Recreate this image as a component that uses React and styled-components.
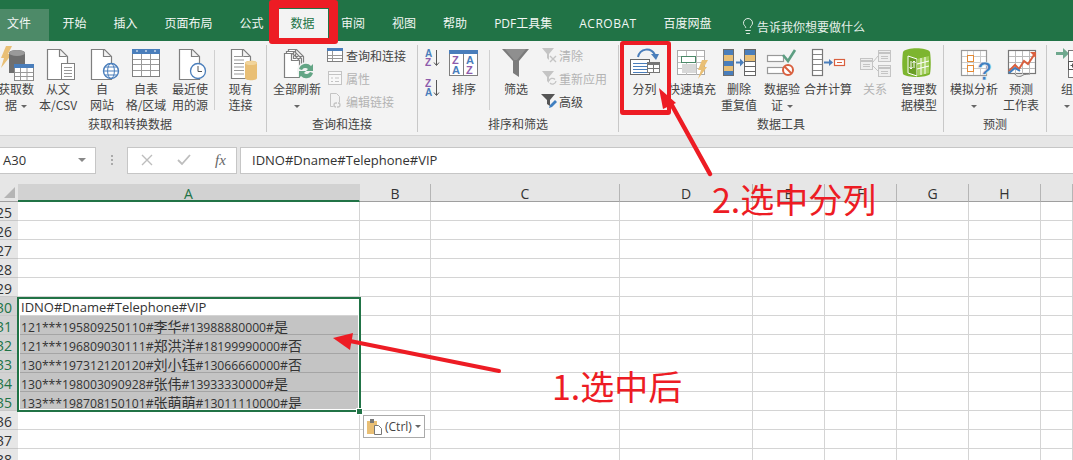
import React from 'react';
import styled, { createGlobalStyle } from 'styled-components';
import { Lightbulb } from 'lucide-react';

const GREEN = '#217346';
const RED = '#ed1c24';
const LATIN = '"Open Sans", "Noto Sans CJK SC", sans-serif';
const COLS = '18px 342px 71px 189px 133px 72px 72px 72px 72px 1fr';

const GlobalStyle = createGlobalStyle`
  html, body { margin: 0; padding: 0; background: #fff; }
  body { font-family: "Noto Sans CJK SC", "Liberation Sans", sans-serif; font-size: 12px; color: #444; }
`;

const Page = styled.div`
  position: relative;
  width: 1073px;
  height: 460px;
  overflow: hidden;
`;

const TabBar = styled.div`
  display: flex;
  align-items: flex-end;
  height: 41px;
  background: ${GREEN};
`;

const Tab = styled.div`
  height: 32px;
  line-height: 29px;
  padding: 0 13.5px;
  color: #f2f7f4;
  white-space: nowrap;
  font-family: ${LATIN};
  font-size: 12px;
  letter-spacing: ${p => p.$ls || 0}px;
`;

const FileTab = styled(Tab)`
  padding: 0 18px 0 7px;
  background: #4d8a68;
`;

const ActiveTab = styled(Tab)`
  width: 49px;
  box-sizing: border-box;
  padding: 0 12px;
  margin-left: 1.5px;
  background: #f3f3f3;
  color: ${GREEN};
`;

const TellMe = styled.div`
  display: flex;
  align-items: center;
  height: 30px;
  margin-left: 14px;
  color: #e6f0ea;
  white-space: nowrap;
`;

const Ribbon = styled.div`
  display: flex;
  height: 94px;
  margin-left: -6px;
  background: #f3f3f3;
  border-bottom: 1px solid #d4d4d4;
`;

const Group = styled.div`
  display: flex;
  flex-direction: column;
  flex: none;
  width: ${p => p.$w}px;
`;

const Tools = styled.div`
  display: flex;
  flex: 1;
  padding-top: 5px;
  min-height: 0;
`;

const GroupLabel = styled.div`
  height: 22px;
  line-height: 22px;
  text-align: center;
  color: #444;
  white-space: nowrap;
`;

const GroupSep = styled.div`
  flex: none;
  width: 1px;
  margin: 4px 0 3px;
  background: #c8c8c8;
`;

const ToolSep = styled.div`
  flex: none;
  width: 1px;
  height: 60px;
  margin: 4px ${p => p.$mr || 0}px 0 ${p => p.$ml || 0}px;
  background: #d0d0d0;
`;

const Tool = styled.div`
  display: flex;
  flex-direction: column;
  align-items: center;
  flex: none;
  width: ${p => p.$w}px;
  margin-left: ${p => p.$ml || 0}px;
  color: ${p => (p.$off ? '#b4b4b4' : '#444')};

  svg { display: block; flex: none; overflow: visible; }
`;

const ToolText = styled.div`
  margin-top: -1px;
  line-height: 15.5px;
  text-align: center;
  white-space: nowrap;
`;

const Caret = styled.span`
  display: inline-block;
  width: 0;
  height: 0;
  margin-left: ${p => p.$ml ?? 4}px;
  vertical-align: 2px;
  border: 3px solid transparent;
  border-top: 3px solid #666;
  border-bottom: 0;
`;

const Stack = styled.div`
  display: flex;
  flex-direction: column;
  flex: none;
  gap: ${p => p.$gap ?? 7}px;
  margin-left: ${p => p.$ml || 0}px;
  padding-top: ${p => p.$top ?? 1}px;
`;

const StackItem = styled.div`
  display: flex;
  align-items: center;
  gap: ${p => p.$gap ?? 3}px;
  height: 16px;
  white-space: nowrap;
  color: ${p => (p.$off ? '#b4b4b4' : '#444')};
`;

const FormulaBar = styled.div`
  display: flex;
  align-items: center;
  height: 48px;
  background: #e6e6e6;
`;

const NameBox = styled.div`
  display: flex;
  align-items: center;
  justify-content: space-between;
  box-sizing: border-box;
  width: 97px;
  height: 27px;
  margin-left: -1px;
  padding: 0 9px 0 3px;
  background: #fff;
  border: 1px solid #c6c6c6;
  font-family: ${LATIN};
  font-size: 13px;
  color: #333;
`;

const NameCaret = styled.span`
  width: 0;
  height: 0;
  border: 4px solid transparent;
  border-top: 4px solid #888;
  border-bottom: 0;
`;

const Grip = styled.div`
  width: 2px;
  height: 10px;
  margin: 0 14px 0 15px;
  background: repeating-linear-gradient(#aaa 0 2px, transparent 2px 4px);
`;

const FormulaButtons = styled.div`
  display: flex;
  align-items: center;
  gap: 24px;
  box-sizing: border-box;
  width: 110px;
  height: 27px;
  padding-left: 13px;
  background: #fff;
  border: 1px solid #c6c6c6;
`;

const FxLabel = styled.span`
  font: italic 15px "Liberation Serif", serif;
  color: #666;
`;

const FormulaInput = styled.div`
  flex: 1;
  height: 27px;
  margin-left: 3px;
  padding-left: 11px;
  line-height: 24px;
  box-sizing: border-box;
  background: #fff;
  border: 1px solid #c6c6c6;
  border-right: 0;
  font-family: ${LATIN};
  font-size: 13px;
  color: #333;
`;

const Sheet = styled.div`
  position: relative;
  font-family: ${LATIN};
`;

const HeaderRow = styled.div`
  display: grid;
  grid-template-columns: ${COLS};
  height: 18px;
`;

const ColHead = styled.div`
  box-sizing: border-box;
  height: 18px;
  line-height: 20px;
  text-align: center;
  font-size: 14px;
  background: ${p => (p.$on ? '#d2d2d2' : '#e6e6e6')};
  color: ${p => (p.$on ? GREEN : '#333')};
  border-right: 1px solid ${p => (p.$on ? '#d2d2d2' : '#b5b5b5')};
  border-bottom: ${p => (p.$on ? `2px solid ${GREEN}` : '1px solid #9f9f9f')};
`;

const Corner = styled.div`
  position: relative;
  height: 18px;
  box-sizing: border-box;
  background: #e6e6e6;
  border-bottom: 1px solid #9f9f9f;

  &::after {
    content: '';
    position: absolute;
    right: 3px;
    bottom: 3px;
    border-style: solid;
    border-width: 0 0 11px 11px;
    border-color: transparent transparent #b5b5b5 transparent;
  }
`;

const Row = styled.div`
  display: grid;
  grid-template-columns: ${COLS};
  height: 19px;
`;

const RowHead = styled.div`
  box-sizing: border-box;
  display: flex;
  justify-content: flex-end;
  height: 19px;
  padding-right: 6px;
  overflow: hidden;
  line-height: 21px;
  font-size: 14px;
  background: ${p => (p.$on ? '#d2d2d2' : '#e6e6e6')};
  color: ${p => (p.$on ? GREEN : '#333')};
  border-bottom: 1px solid #c8c8c8;
`;

const Cell = styled.div`
  box-sizing: border-box;
  height: 19px;
  padding-left: 3px;
  line-height: 20px;
  font-size: ${p => (p.$big ? 13 : 12.2)}px;
  color: #333;
  white-space: nowrap;
  background: ${p => (p.$on ? '#c4c4c4' : '#fff')};
  border-right: 1px solid ${p => (p.$on ? '#c4c4c4' : '#d4d4d4')};
  border-bottom: 1px solid ${p => (p.$on ? '#a5a5a5' : '#d4d4d4')};
`;

const Han = styled.span`
  font-family: "Noto Sans CJK SC", sans-serif;
  font-size: 14px;
`;

const Selection = styled.div`
  position: absolute;
  left: 17px;
  top: 113px;
  width: 344px;
  height: 115px;
  box-sizing: border-box;
  border: 2px solid ${GREEN};
  box-shadow: inset 0 0 0 1px #fff;
`;

const Handle = styled.div`
  position: absolute;
  right: -4px;
  bottom: -5px;
  width: 7px;
  height: 7px;
  box-sizing: border-box;
  background: ${GREEN};
  border: 1px solid #fff;
`;

const PasteTag = styled.div`
  position: absolute;
  left: 363px;
  top: 231px;
  display: flex;
  align-items: center;
  gap: 3px;
  box-sizing: border-box;
  width: 62px;
  height: 23px;
  padding-left: 3px;
  background: #fff;
  border: 1px solid #aaa;
  font-size: 12px;
  color: #444;
`;

const Mark = styled.div`
  position: absolute;
  left: ${p => p.$x}px;
  top: ${p => p.$y}px;
  width: ${p => p.$w}px;
  height: ${p => p.$h}px;
  box-sizing: border-box;
  border-style: solid;
  border-color: ${RED};
  border-width: ${p => p.$b};
  border-radius: 3px;
`;

const Note = styled.div`
  position: absolute;
  left: ${p => p.$x}px;
  top: ${p => p.$y}px;
  font-family: "Noto Sans CJK SC", sans-serif;
  font-size: 34px;
  line-height: 50px;
  color: ${RED};
  white-space: nowrap;
`;

const Arrows = styled.svg`
  position: absolute;
  left: 0;
  top: 0;
  pointer-events: none;
`;

const GRAY = '#7f7f7f';
const BLUE = '#4a7ebb';
const GOLD = '#e9bf75';
const LIGHT = '#c4c4c4';

function Sheetfold({ x, y, w, h, c = GRAY }) {
  return (
    <path
      d={`M${x + .5} ${y + .5}h${w - 7}l7 7v${h - 8}h${-w}z M${x + w - 7.5} ${y + .5}v7h7`}
      fill="#fff"
      stroke={c}
      strokeWidth="1.2"
    />
  );
}

function TextLines({ x, y, w, n, gap = 3, c = '#999' }) {
  const lines = [];
  for (let i = 0; i < n; i++) {
    lines.push(<path key={i} d={`M${x} ${y + i * gap + .5}h${w}`} stroke={c} />);
  }
  return <>{lines}</>;
}

function Icon({ w = 36, h = 36, children }) {
  return <svg width={w} height={h} viewBox={`0 0 ${w} ${h}`}>{children}</svg>;
}

function GetDataIcon() {
  return (
    <Icon>
      <path d="M8 0h6l-4 8h4L3 22l3-10H3z" fill={GOLD} />
      <path d="M11 7c0-4 16-4 16 0v20H11z" fill="#6f6f6f" />
      <ellipse cx="19" cy="7" rx="8" ry="3" fill="#9a9a9a" />
      <rect x="16.5" y="18.5" width="19" height="16" fill="#fff" stroke="#8a8a8a" />
      <rect x="16" y="18" width="20" height="4" fill={BLUE} />
      <path d="M17 26.5h18M17 30.5h18M22.5 22v12M29 22v12" stroke="#999" />
    </Icon>
  );
}

function TextFileIcon() {
  return (
    <Icon>
      <Sheetfold x={7} y={3} w={20} h={31} />
      <rect x="21.5" y="17.5" width="13" height="16" fill="#fff" stroke={GRAY} />
      <TextLines x={24} y={21} w={8} n={4} />
    </Icon>
  );
}

function WebIcon() {
  return (
    <Icon>
      <Sheetfold x={7} y={3} w={20} h={31} />
      <circle cx="27" cy="25" r="7.5" fill="#fff" stroke={BLUE} strokeWidth="1.4" />
      <ellipse cx="27" cy="25" rx="3.4" ry="7.5" fill="none" stroke={BLUE} />
      <path d="M19.5 25h15M20.5 21h13M20.5 29h13" stroke={BLUE} />
    </Icon>
  );
}

function TableIcon() {
  return (
    <Icon>
      <rect x="4.5" y="3.5" width="27" height="27" fill="#fff" stroke={GRAY} />
      <rect x="4" y="3" width="28" height="5" fill={BLUE} />
      <path d="M8 5h2M17 5h2M26 5h2" stroke="#fff" />
      <path d="M5 13.5h26M5 18.5h26M5 24.5h26M13.5 8v22M22.5 8v22" stroke="#999" />
    </Icon>
  );
}

function RecentIcon() {
  return (
    <Icon>
      <Sheetfold x={7} y={3} w={20} h={31} />
      <circle cx="26" cy="25" r="7.5" fill="#fff" stroke={BLUE} strokeWidth="1.3" />
      <path d="M26 20v5.5h4" fill="none" stroke="#555" />
    </Icon>
  );
}

function ExistingIcon() {
  return (
    <Icon>
      <Sheetfold x={8} y={3} w={19} h={30} />
      <TextLines x={11} y={10} w={10} n={6} gap={3.5} />
      <path d="M22 17c0-3 12-3 12 0v15c0 3-12 3-12 0z" fill={GOLD} />
      <ellipse cx="28" cy="17" rx="6" ry="2" fill="#f1d49b" />
    </Icon>
  );
}

function RefreshIcon() {
  return (
    <Icon>
      <Sheetfold x={9} y={3} w={15} h={24} />
      <Sheetfold x={7} y={5} w={15} h={25} />
      <Sheetfold x={5} y={7} w={15} h={25} />
      <circle cx="27" cy="25" r="9" fill="#f3f3f3" />
      <path d="M20 23a7 7 0 0 1 12-3l2-2v7h-7l2-2a4 4 0 0 0-6 1zM34 27a7 7 0 0 1-12 3l-2 2v-7h7l-2 2a4 4 0 0 0 6-1z" fill="#63a585" />
    </Icon>
  );
}

function QueryIcon() {
  return (
    <Icon w={16} h={16}>
      <rect x=".5" y="1.5" width="15" height="13" fill="#fff" stroke={GRAY} />
      <rect x="0" y="1" width="16" height="3" fill={BLUE} />
      <path d="M1 8.5h14M1 11.5h14M5.5 4v10" stroke="#999" />
    </Icon>
  );
}

function PropsIcon() {
  return (
    <Icon w={16} h={16}>
      <rect x="1.5" y="1.5" width="13" height="13" fill="#f8f8f8" stroke={LIGHT} />
      <path d="M1 4.5h14" stroke={LIGHT} />
      <path d="M4 8h2M8 8h4M4 11.5h2M8 11.5h4" stroke={LIGHT} />
    </Icon>
  );
}

function LinksIcon() {
  return (
    <Icon w={16} h={16}>
      <path d="M3.5 .5h6l3 3v6M3.5 .5v13h3" fill="none" stroke={LIGHT} />
      <path d="M7 12a2 2 0 0 1 2-2h1M13 12a2 2 0 0 1-2 2h-1M9 14a2 2 0 0 1-2-2M11 10a2 2 0 0 1 2 2" fill="none" stroke={LIGHT} strokeWidth="1.3" />
    </Icon>
  );
}

const Letter = ({ x, y, c, s = 10, children }) => (
  <text x={x} y={y} fill={c} fontSize={s} fontFamily='"Liberation Sans", sans-serif' fontWeight="700">{children}</text>
);

function SortSmall({ up }) {
  return (
    <Icon w={16} h={18}>
      <Letter x={0} y={8} c={up ? BLUE : '#8e5bab'}>{up ? 'A' : 'Z'}</Letter>
      <Letter x={0} y={17} c={up ? '#8e5bab' : BLUE}>{up ? 'Z' : 'A'}</Letter>
      <path d="M11.5 1v15M9 13.5l2.5 3 2.5-3" fill="none" stroke="#555" />
    </Icon>
  );
}

function SortBig() {
  return (
    <Icon w={30} h={36}>
      <rect x=".5" y="4.5" width="28" height="25" fill="#fff" stroke={GRAY} />
      <rect x="0" y="4" width="29" height="4" fill={BLUE} />
      <path d="M14.5 8v22" stroke={GRAY} />
      <Letter x={3} y={18} c="#8e5bab" s={11}>Z</Letter>
      <Letter x={3} y={28} c={BLUE} s={11}>A</Letter>
      <Letter x={17} y={18} c={BLUE} s={11}>A</Letter>
      <Letter x={17} y={28} c="#8e5bab" s={11}>Z</Letter>
    </Icon>
  );
}

function FunnelIcon() {
  return (
    <Icon>
      <path d="M4 3h27L21 15v16l-6-4V15z" fill="#7b7b7b" />
      <path d="M7 3h21L19 14h-3z" fill="#8f8f8f" />
    </Icon>
  );
}

function ClearIcon() {
  return (
    <Icon w={16} h={16}>
      <path d="M1 1h12L8 7v6L6 11V7z" fill={LIGHT} />
      <path d="M9 9l6 6M15 9l-6 6" stroke={LIGHT} strokeWidth="1.4" />
    </Icon>
  );
}

function ReapplyIcon() {
  return (
    <Icon w={16} h={16}>
      <path d="M1 1h12L8 7v6L6 11V7z" fill={LIGHT} />
      <path d="M8 11a3.5 3.5 0 0 1 6-1.5M15 11a3.5 3.5 0 0 1-6 2" fill="none" stroke={LIGHT} strokeWidth="1.3" />
    </Icon>
  );
}

function AdvancedIcon() {
  return (
    <Icon w={16} h={16}>
      <path d="M0 1h14L9 7v6L6 11V7z" fill="#555" />
      <path d="M8 15l1-3 5-5 2 2-5 5z" fill="#3f7fc0" />
    </Icon>
  );
}

function TextToColsIcon() {
  return (
    <Icon>
      <path d="M11 11C13 2 24 1 28 9" fill="none" stroke={BLUE} strokeWidth="2" />
      <path d="M24 8l8 0-3 6z" fill={BLUE} />
      <rect x="3.5" y="13.5" width="19" height="15" fill="#fff" stroke="#666" />
      <path d="M6 17.5h14M6 20.5h14M6 23.5h14M6 26.5h14" stroke={BLUE} />
      <rect x="20.5" y="16.5" width="12" height="10" fill="#fff" stroke="#777" />
      <rect x="20" y="16" width="13" height="3" fill="#777" />
      <path d="M26.5 19v7M21 22.5h11" stroke="#777" />
    </Icon>
  );
}

function FlashFillIcon() {
  return (
    <Icon>
      <rect x="3.5" y="4.5" width="27" height="24" fill="#fff" stroke="#aaa" />
      <path d="M4 10.5h26M4 16.5h26M4 22.5h26M12.5 5v24M22.5 5v24" stroke="#bbb" />
      <rect x="7.5" y="10.5" width="14" height="6" fill="#fff" stroke="#4c8a69" />
      <rect x="8" y="18" width="14" height="9" fill="#d8d8d8" />
      <path d="M28 14h6l-4 7h3L24 33l3-9h-3z" fill={GOLD} />
    </Icon>
  );
}

function RemoveDupIcon() {
  return (
    <Icon>
      <rect x="2" y="3" width="11" height="27" fill="#6d6d6d" />
      <rect x="3" y="4" width="9" height="25" fill={BLUE} />
      <rect x="3" y="9" width="9" height="6" fill={GOLD} />
      <rect x="3" y="20" width="9" height="5" fill={GOLD} />
      <rect x="23.5" y="3.5" width="11" height="26" fill="#fff" stroke="#666" />
      <rect x="24" y="4" width="10" height="5" fill={BLUE} />
      <rect x="24" y="9" width="10" height="6" fill={GOLD} />
      <path d="M24 15.5h10M24 20.5h10M24 25.5h10" stroke="#666" />
      <path d="M15 16.5h5" stroke={BLUE} strokeWidth="2" />
      <path d="M19 12.5l4 4-4 4z" fill={BLUE} />
    </Icon>
  );
}

function ValidateIcon() {
  return (
    <Icon>
      <rect x="3.5" y="9.5" width="16" height="6" fill="#fff" stroke="#999" strokeWidth="1.2" />
      <rect x="3.5" y="21.5" width="16" height="6" fill="#fff" stroke="#999" strokeWidth="1.2" />
      <path d="M19 9l5 6 7-11" fill="none" stroke="#5d9e82" strokeWidth="2.6" />
      <circle cx="24" cy="24" r="5" fill="#fff" stroke="#d9603f" strokeWidth="2" />
      <path d="M20.5 20.5l7 7" stroke="#d9603f" strokeWidth="2" />
    </Icon>
  );
}

function ConsolidateIcon() {
  return (
    <Icon>
      <rect x="2.5" y="3.5" width="10" height="26" fill="#fff" stroke="#777" strokeWidth="1.2" />
      <path d="M3 8.5h9M3 13.5h9M3 18.5h9M3 24.5h9" stroke="#888" />
      <path d="M14 16.5h6" stroke={BLUE} strokeWidth="2" />
      <path d="M19 13l4 3.5-4 3.5z" fill={BLUE} />
      <rect x="24.5" y="13.5" width="10" height="6" fill="#fff" stroke="#d9603f" strokeWidth="1.2" />
      <path d="M27 16.5h5" stroke="#d9603f" />
    </Icon>
  );
}

function RelationIcon() {
  return (
    <Icon>
      <rect x="3.5" y="12.5" width="12" height="11" fill="#eee" stroke={LIGHT} />
      <rect x="21.5" y="4.5" width="12" height="11" fill="#eee" stroke={LIGHT} />
      <rect x="21.5" y="19.5" width="12" height="11" fill="#eee" stroke={LIGHT} />
      <path d="M16 16l5-6M16 20l5 5" stroke={LIGHT} />
      <path d="M3 15h13M21 7h13M21 22h13" stroke={LIGHT} strokeWidth="2" />
      <path d="M6 18.5h7M6 20.5h7M24 10.5h7M24 12.5h7M24 25.5h7M24 27.5h7" stroke={LIGHT} />
    </Icon>
  );
}

function ModelIcon() {
  return (
    <Icon>
      <path d="M2 6c3-5 24-5 27 0 1 7 1 16 0 22-3 4-24 4-27 0-1-6-1-15 0-22z" fill="#7db52f" />
      <path d="M7 10l9 3v17l-9-3z" fill="#6a9e26" stroke="#fff" />
      <path d="M16 13l12-3v17l-12 3z" fill="#a4cf5f" />
      <path d="M16 18l12-3M16 23l12-3M20 12v17M24 11v17" stroke="#fff" />
      <path d="M10 15v8M8.5 21l1.5 2 1.500-2M13 22v-7M11.5 17l1.5-2 1.5 2" fill="none" stroke="#fff" />
    </Icon>
  );
}

function WhatIfIcon() {
  return (
    <Icon>
      <rect x="5.5" y="4.5" width="25" height="25" fill="#fff" stroke="#999" strokeWidth="1.2" />
      <path d="M6 10.5h24M6 16.5h24M6 22.5h24M11.5 5v24M17.5 5v24M24.5 5v24" stroke="#ccc" />
      <rect x="11.5" y="9.5" width="6" height="6" fill="#fff" stroke="#e48a35" />
      <rect x="11.5" y="19.5" width="6" height="6" fill="#fff" stroke="#e48a35" />
      <text x="21" y="34" fontSize="25" fontWeight="700" fontFamily='"Liberation Sans", sans-serif' fill="#3f7fc0" stroke="#f3f3f3" strokeWidth=".6">?</text>
    </Icon>
  );
}

function ForecastIcon() {
  return (
    <Icon>
      <rect x="5.5" y="4.5" width="27" height="23" fill="#fff" stroke="#777" strokeWidth="1.2" />
      <path d="M6 10.5h26M6 16.5h26M6 22.5h26M12.5 5v23M19.5 5v23M26.5 5v23" stroke="#bbb" />
      <path d="M6 25l6-6 4 4 5-8 4 3 6-9" fill="none" stroke="#d9603f" strokeWidth="2" />
      <path d="M6 27l6-5 5 3" fill="none" stroke="#3f7fc0" strokeWidth="2" />
      <path d="M27 6h6v6z" fill="#d9603f" />
      <path d="M12 28c1 3 6 3 8 1 2-1 6-1 7-1" fill="none" stroke="#777" />
    </Icon>
  );
}

function GroupIcon() {
  return (
    <Icon>
      <path d="M7 7.5h9" stroke="#6fa88e" strokeWidth="3" />
      <path d="M14 2l6 5.5-6 5.5z" fill="#6fa88e" />
      <rect x="19.5" y="4.5" width="18" height="27" fill="#fff" stroke="#777" />
      <rect x="19.5" y="15.5" width="8" height="8" fill="#fff" stroke="#555" />
      <path d="M21.5 19.5h4M23.5 17.5v4" stroke="#555" />
    </Icon>
  );
}

function ClipboardIcon() {
  return (
    <svg width="15" height="16" viewBox="0 0 15 16">
      <rect x="0" y="2" width="10" height="13" fill={GOLD} />
      <rect x="3" y="0" width="4" height="4" fill="#777" />
      <path d="M7.5 6.5h4l3 3v6h-7z" fill="#fff" stroke="#777" />
    </svg>
  );
}

const TABS = ['开始', '插入', '页面布局', '公式'];
const TABS_AFTER = ['审阅', '视图', '帮助', 'PDF工具集'];
const HEADS = ['A', 'B', 'C', 'D', 'E', 'F', 'G', 'H', ''];
const ROWS = [
  { n: 25 }, { n: 26 }, { n: 27 }, { n: 28 }, { n: 29 },
  { n: 30, text: 'IDNO#Dname#Telephone#VIP', head: true },
  { n: 31, text: '121***195809250110#李华#13988880000#是', on: true },
  { n: 32, text: '121***196809030111#郑洪洋#18199990000#否', on: true },
  { n: 33, text: '130***197312120120#刘小钰#13066660000#否', on: true },
  { n: 34, text: '130***198003090928#张伟#13933330000#是', on: true },
  { n: 35, text: '133***198708150101#张萌萌#13011110000#是', on: true },
  { n: 36 }, { n: 37 }, { n: 38 }, { n: 39 },
];

// 汉字比数字大一号，单独包一层
function CellText({ text = '' }) {
  return text.split(/([\u4e00-\u9fa5]+)/).map((part, i) => (
    i % 2 ? <Han key={i}>{part}</Han> : part
  ));
}

export default function App() {
  return (
    <Page>
      <GlobalStyle />
      <TabBar>
        <FileTab>文件</FileTab>
        {TABS.map(t => <Tab key={t}>{t}</Tab>)}
        <ActiveTab>数据</ActiveTab>
        {TABS_AFTER.map(t => <Tab key={t}>{t}</Tab>)}
        <Tab $ls={0.5}>ACROBAT</Tab>
        <Tab>百度网盘</Tab>
        <TellMe>
          <Lightbulb size={18} strokeWidth={1.3} />
          告诉我你想要做什么
        </TellMe>
      </TabBar>

      <Ribbon>
        <Group $w={272}>
          <Tools>
            <Tool $w={44}><GetDataIcon /><ToolText>获取数<br />据<Caret /></ToolText></Tool>
            <Tool $w={40}><TextFileIcon /><ToolText>从文<br />本/CSV</ToolText></Tool>
            <Tool $w={48}><WebIcon /><ToolText>自<br />网站</ToolText></Tool>
            <Tool $w={40}><TableIcon /><ToolText>自表<br />格/区域</ToolText></Tool>
            <Tool $w={48}><RecentIcon /><ToolText>最近使<br />用的源</ToolText></Tool>
            <ToolSep />
            <Tool $w={51}><ExistingIcon /><ToolText>现有<br />连接</ToolText></Tool>
          </Tools>
          <GroupLabel>获取和转换数据</GroupLabel>
        </Group>
        <GroupSep />
        <Group $w={150}>
          <Tools>
            <Tool $w={48} $ml={6}><RefreshIcon /><ToolText>全部刷新<br /><Caret $ml={0} /></ToolText></Tool>
            <Stack $ml={6}>
              <StackItem><QueryIcon />查询和连接</StackItem>
              <StackItem $off><PropsIcon />属性</StackItem>
              <StackItem $off><LinksIcon />编辑链接</StackItem>
            </Stack>
          </Tools>
          <GroupLabel>查询和连接</GroupLabel>
        </Group>
        <GroupSep />
        <Group $w={200}>
          <Tools>
            <Stack $ml={7} $gap={12} $top={3}>
              <SortSmall up />
              <SortSmall />
            </Stack>
            <Tool $w={46}><SortBig /><ToolText>排序</ToolText></Tool>
            <ToolSep $ml={2} $mr={1} />
            <Tool $w={50}><FunnelIcon /><ToolText>筛选</ToolText></Tool>
            <Stack>
              <StackItem $off $gap={2}><ClearIcon />清除</StackItem>
              <StackItem $off $gap={2}><ReapplyIcon />重新应用</StackItem>
              <StackItem $gap={2}><AdvancedIcon />高级</StackItem>
            </Stack>
          </Tools>
          <GroupLabel>排序和筛选</GroupLabel>
        </Group>
        <GroupSep />
        <Group $w={324}>
          <Tools>
            <Tool $w={45} $ml={3}><TextToColsIcon /><ToolText>分列</ToolText></Tool>
            <Tool $w={50}><FlashFillIcon /><ToolText>快速填充</ToolText></Tool>
            <Tool $w={44}><RemoveDupIcon /><ToolText>删除<br />重复值</ToolText></Tool>
            <Tool $w={42}><ValidateIcon /><ToolText>数据验<br />证<Caret /></ToolText></Tool>
            <Tool $w={50}><ConsolidateIcon /><ToolText>合并计算</ToolText></Tool>
            <Tool $w={44} $off><RelationIcon /><ToolText>关系</ToolText></Tool>
            <Tool $w={44}><ModelIcon /><ToolText>管理数<br />据模型</ToolText></Tool>
          </Tools>
          <GroupLabel>数据工具</GroupLabel>
        </Group>
        <GroupSep />
        <Group $w={102}>
          <Tools>
            <Tool $w={52} $ml={4}><WhatIfIcon /><ToolText>模拟分析<br /><Caret $ml={0} /></ToolText></Tool>
            <Tool $w={42}><ForecastIcon /><ToolText>预测<br />工作表</ToolText></Tool>
          </Tools>
          <GroupLabel>预测</GroupLabel>
        </Group>
        <GroupSep />
        <Group $w={40}>
          <Tools>
            <Tool $w={40}><GroupIcon /><ToolText>组<br /><Caret $ml={0} /></ToolText></Tool>
          </Tools>
        </Group>
      </Ribbon>

      <FormulaBar>
        <NameBox>A30<NameCaret /></NameBox>
        <Grip />
        <FormulaButtons>
          <svg width="12" height="12" viewBox="0 0 12 12"><path d="M1 1l10 10M11 1L1 11" stroke="#bdbdbd" strokeWidth="1.4" /></svg>
          <svg width="14" height="12" viewBox="0 0 14 12"><path d="M1 6l4 4 8-9" fill="none" stroke="#bdbdbd" strokeWidth="1.8" /></svg>
          <FxLabel>fx</FxLabel>
        </FormulaButtons>
        <FormulaInput>IDNO#Dname#Telephone#VIP</FormulaInput>
      </FormulaBar>

      <Sheet>
        <HeaderRow>
          <Corner />
          {HEADS.map((h, i) => <ColHead key={i} $on={h === 'A'}>{h}</ColHead>)}
        </HeaderRow>
        {ROWS.map(r => (
          <Row key={r.n}>
            <RowHead $on={r.on || r.head}>{r.n}</RowHead>
            <Cell $on={r.on} $big={r.head}><CellText text={r.text} /></Cell>
            {HEADS.slice(1).map((h, i) => <Cell key={i} />)}
          </Row>
        ))}
        <Selection><Handle /></Selection>
        <PasteTag><ClipboardIcon />(Ctrl)<Caret $ml={0} /></PasteTag>
      </Sheet>

      <Mark $x={269} $y={0} $w={69} $h={44} $b="8px 9px 6px 10px" />
      <Mark $x={620} $y={41} $w={51} $h={74} $b="4px 4px 5px 4px" />
      <Note $x={712} $y={174}>2.选中分列</Note>
      <Note $x={552} $y={361}>1.选中后</Note>
      <Arrows width="1073" height="460" viewBox="0 0 1073 460">
        <path d="M710 174L669 100" stroke={RED} strokeWidth="4.5" strokeLinecap="round" />
        <path d="M659 88L676 103L663 109z" fill={RED} />
        <path d="M499 371L345 340" stroke={RED} strokeWidth="4" strokeLinecap="round" />
        <path d="M333 338L353 333L350 350z" fill={RED} />
      </Arrows>
    </Page>
  );
}
